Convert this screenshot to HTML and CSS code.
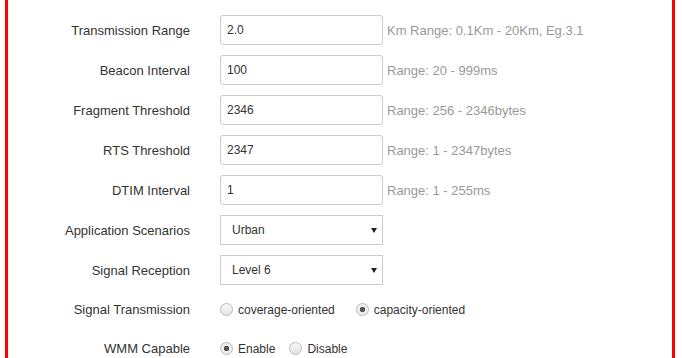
FILE: index.html
```html
<!DOCTYPE html>
<html lang="en">

<head>
    <meta charset="UTF-8">
    <title>Wireless Advanced</title>
    <link rel="stylesheet" href="styles.css">
</head>

<body>
    <form class="panel">
        <div class="row">
            <label class="navn">Transmission Range</label>
            <input class="felt" type="text" value="2.0">
            <span class="hint">Km Range: 0.1Km - 20Km, Eg.3.1</span>
        </div>
        <div class="row">
            <label class="navn">Beacon Interval</label>
            <input class="felt" type="text" value="100">
            <span class="hint">Range: 20 - 999ms</span>
        </div>
        <div class="row">
            <label class="navn">Fragment Threshold</label>
            <input class="felt" type="text" value="2346">
            <span class="hint">Range: 256 - 2346bytes</span>
        </div>
        <div class="row">
            <label class="navn">RTS Threshold</label>
            <input class="felt" type="text" value="2347">
            <span class="hint">Range: 1 - 2347bytes</span>
        </div>
        <div class="row">
            <label class="navn">DTIM Interval</label>
            <input class="felt" type="text" value="1">
            <span class="hint">Range: 1 - 255ms</span>
        </div>
        <div class="row">
            <label class="navn">Application Scenarios</label>
            <span class="vaelg">
                <select>
                    <option>Urban</option>
                    <option>Suburban</option>
                </select>
            </span>
        </div>
        <div class="row">
            <label class="navn">Signal Reception</label>
            <span class="vaelg">
                <select>
                    <option>Level 6</option>
                    <option>Level 5</option>
                </select>
            </span>
        </div>
        <div class="row lav">
            <label class="navn">Signal Transmission</label>
            <label class="radio bred"><input type="radio" name="tx"> coverage-oriented</label>
            <label class="radio"><input type="radio" name="tx" checked> capacity-oriented</label>
        </div>
        <div class="row lav">
            <label class="navn">WMM Capable</label>
            <label class="radio smal"><input type="radio" name="wmm" checked> Enable</label>
            <label class="radio"><input type="radio" name="wmm"> Disable</label>
        </div>
    </form>
</body></html>
```

FILE: styles.css
```css
body {
    margin: 0;
    background-color: white;
    font-family: "Liberation Sans", Arial, sans-serif;
    font-size: 13px;
    color: #333;
}

.panel {
    box-sizing: border-box;
    width: 670px;
    height: 358px;
    overflow: hidden;
    margin-left: 5px;
    border-left: 3px solid red;
    border-right: 3px solid red;
    padding-top: 10px;
}

.row {
    display: flex;
    align-items: center;
    height: 40px;
}

.row.lav {
    height: 39px;
}

.navn {
    width: 182px;
    text-align: right;
    margin-right: 30px;
    color: #333;
}

.felt {
    box-sizing: border-box;
    width: 163px;
    height: 30px;
    margin: 0;
    padding: 0 6px;
    border: 1px solid #ccc;
    border-radius: 3px;
    font-family: inherit;
    font-size: 12px;
    color: #333;
}

.hint {
    margin-left: 4px;
    color: #999;
}

.vaelg {
    position: relative;
    display: block;
}

.vaelg select {
    appearance: none;
    box-sizing: border-box;
    width: 163px;
    height: 30px;
    margin: 0;
    padding: 0 11px;
    border: 1px solid #ccc;
    border-radius: 0;
    background-color: white;
    font-family: inherit;
    font-size: 12px;
    color: #333;
}

.vaelg::after {
    content: "";
    position: absolute;
    right: 6px;
    top: 13px;
    border-left: 3px solid transparent;
    border-right: 3px solid transparent;
    border-top: 5px solid #222;
}

.radio {
    display: flex;
    align-items: center;
    color: #333;
    font-size: 12px;
}

.radio.bred {
    margin-right: 21px;
}

.radio.smal {
    margin-right: 14px;
}

.radio input {
    appearance: none;
    box-sizing: border-box;
    width: 13px;
    height: 13px;
    margin: 0 5px 0 0;
    border: 1px solid #bbb;
    border-radius: 50%;
    background: linear-gradient(#f8f8f8, #e2e2e2);
}

.radio input:checked {
    background: radial-gradient(circle, #555 0, #555 2.5px, #eee 3px);
}
```
